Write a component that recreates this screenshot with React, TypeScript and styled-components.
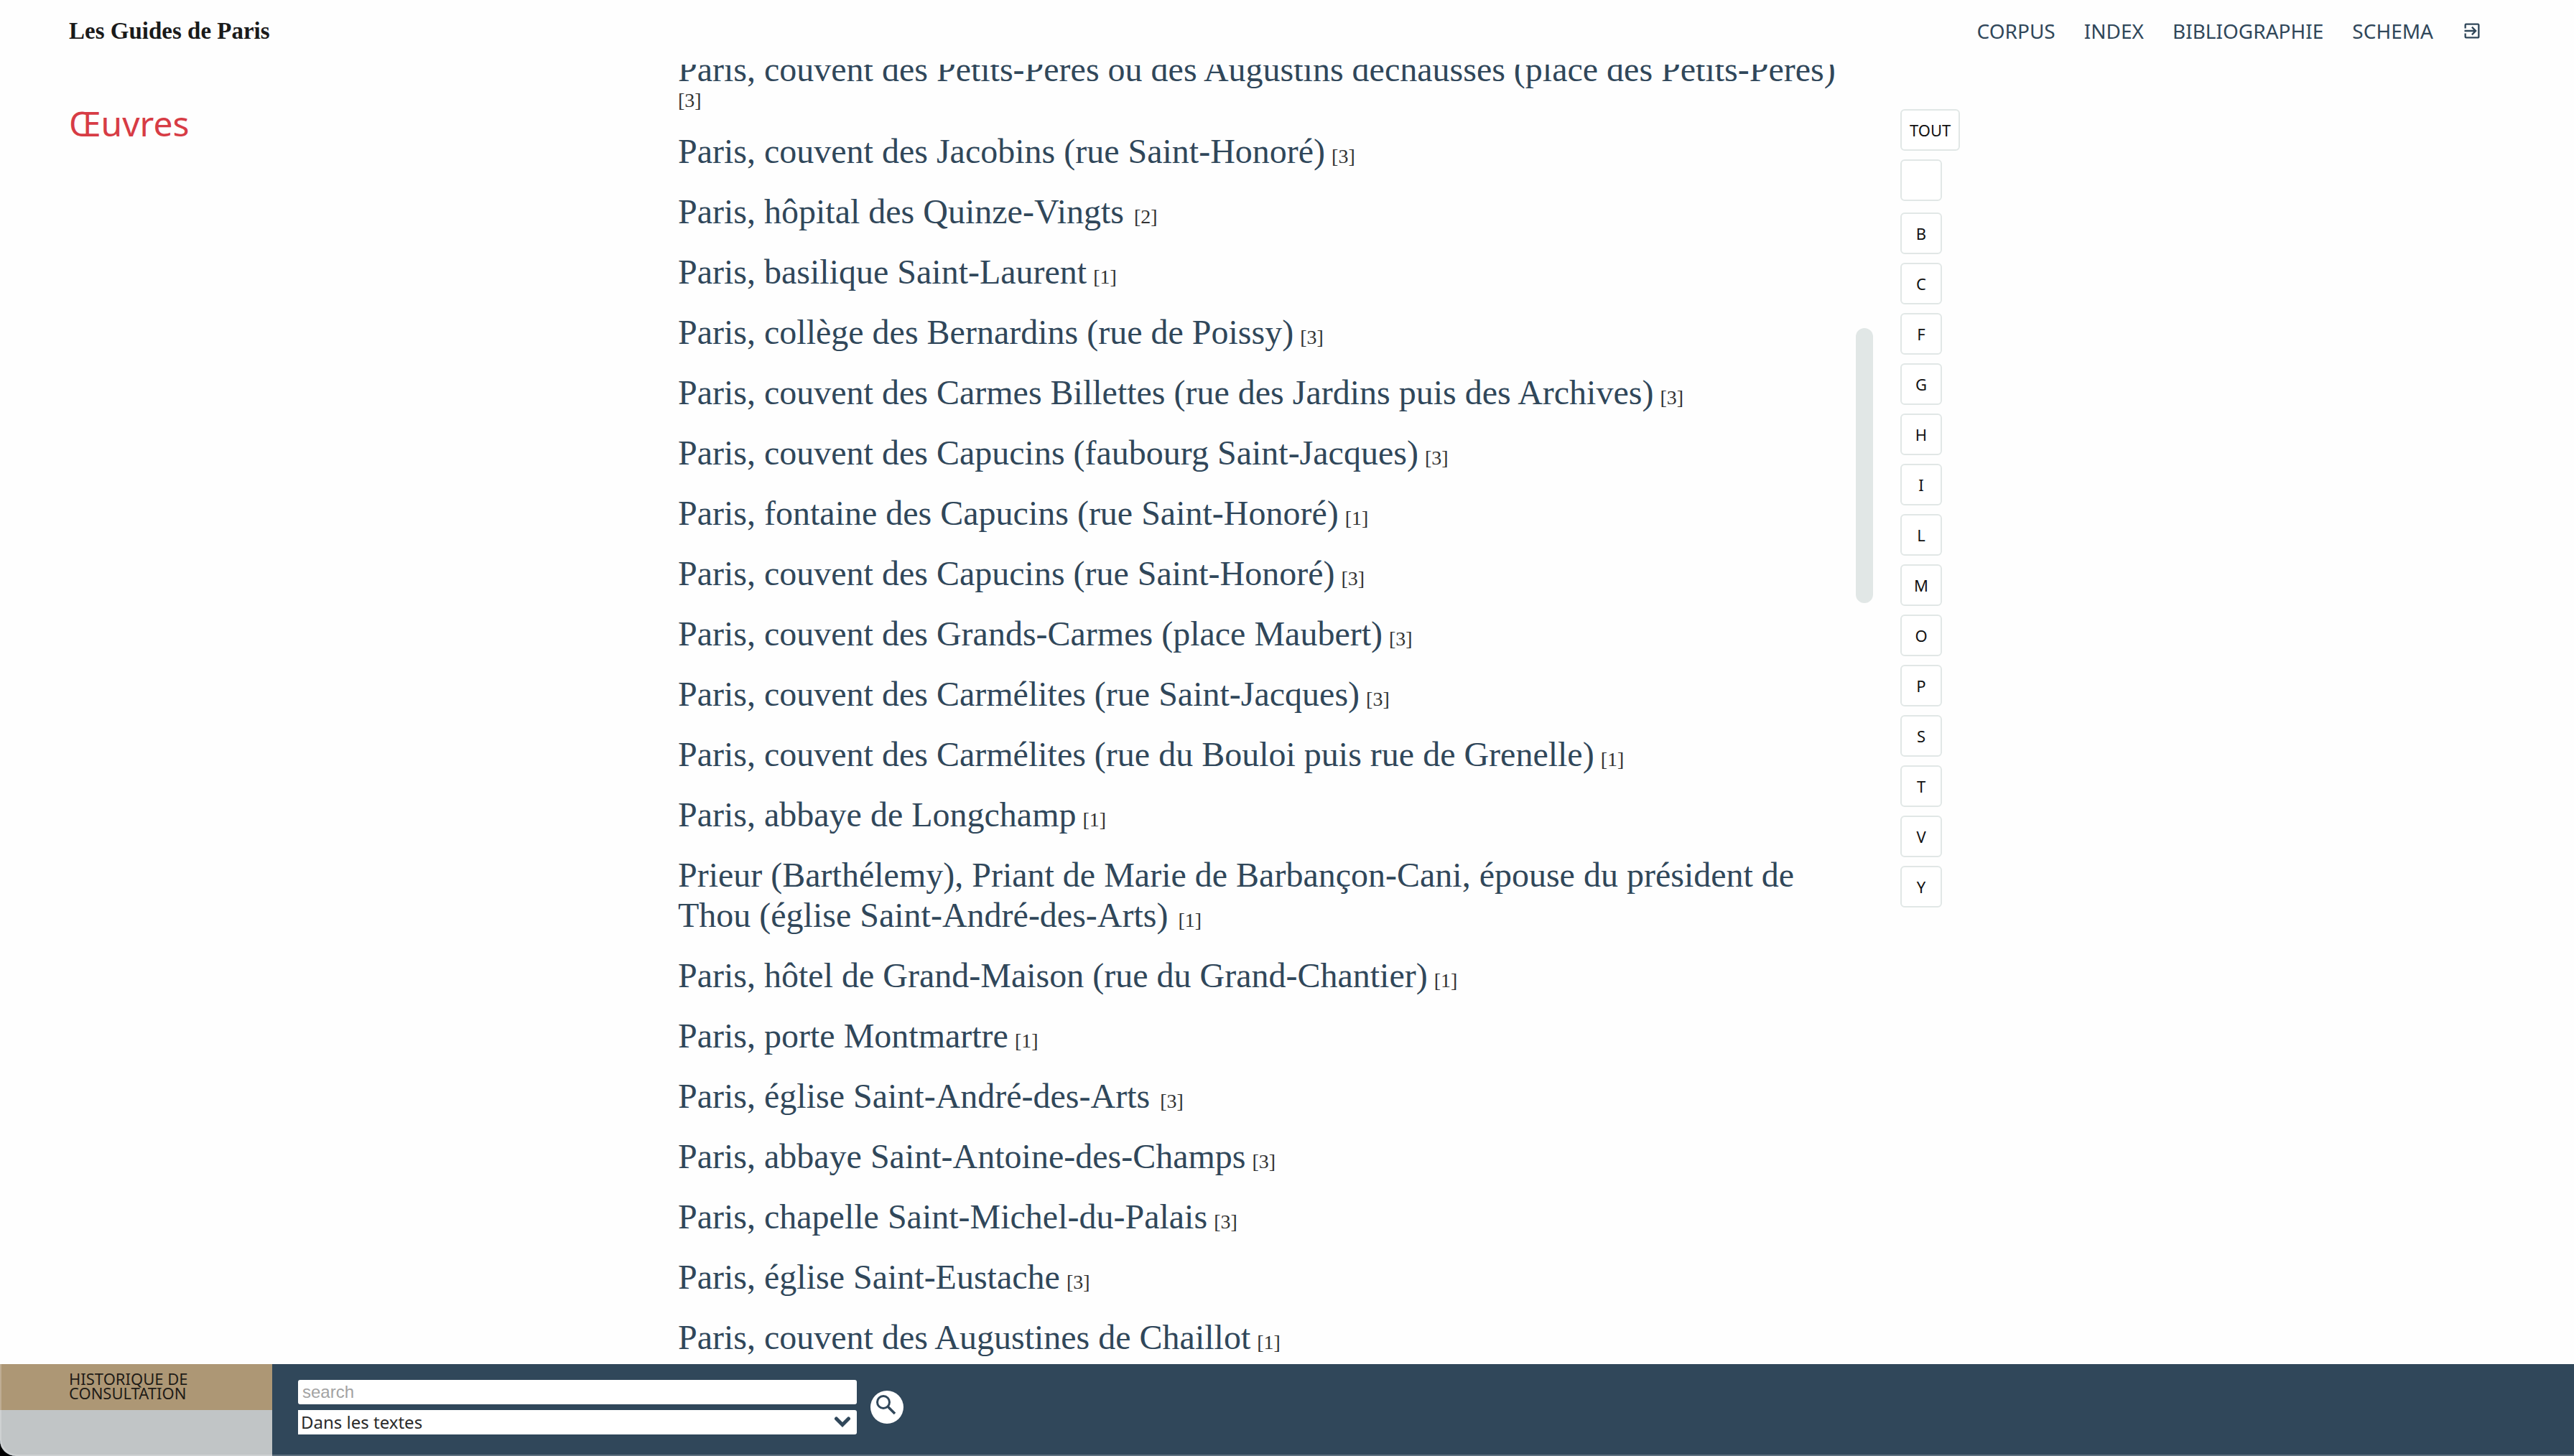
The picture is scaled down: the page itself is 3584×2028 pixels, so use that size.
import React, { useState } from "react";
import styled, { createGlobalStyle } from "styled-components";

const serif = `"Liberation Serif", "Times New Roman", serif`;
const sans = `"Noto Sans", "Open Sans", sans-serif`;
const navy = "#30475a";
const pale = "#e1e7e6";

const GlobalStyle = createGlobalStyle`
  *, *::before, *::after { box-sizing: border-box; }
  body { margin: 0; background: #000; font-family: ${sans}; color: #1a1a1a; }
`;

const Page = styled.div`
  height: 100vh;
  display: grid;
  grid-template-rows: auto minmax(0, 1fr) auto;
  background: #fefefe;
  border-bottom-left-radius: 22px;
  overflow: hidden;
`;

const Header = styled.header`
  height: 90px;
  padding: 0 128px 4px 96px;
  display: flex;
  align-items: center;
  justify-content: space-between;
`;

const SiteTitle = styled.a`
  font-family: ${serif};
  font-size: 33px;
  font-weight: 700;
  color: #1a1a1a;
  text-decoration: none;
`;

const Nav = styled.nav`
  display: flex;
  align-items: center;
  gap: 40px;
`;

const NavLink = styled.a`
  display: flex;
  font-size: 28px;
  line-height: 40px;
  color: ${navy};
  text-decoration: none;
`;

const Main = styled.main`
  display: grid;
  grid-template-columns: 848fr 1664fr 880fr;
  padding: 0 96px;
  min-height: 0;
`;

const Heading = styled.h1`
  margin: 50px 0 0;
  font-size: 48px;
  line-height: 64px;
  font-weight: 400;
  color: #d73c45;
`;

const ListPane = styled.section`
  display: grid;
  grid-template-columns: minmax(0, 1fr) 24px;
  min-height: 0;
`;

const ListWindow = styled.div`
  overflow: hidden;
`;

const WorkList = styled.ul`
  list-style: none;
  margin: -21px 0 0;
  padding: 0;
  display: flex;
  flex-direction: column;
  gap: 28px;
  font-family: ${serif};
`;

const Work = styled.li`
  font-size: 28px;
  line-height: 30px;
  color: #333;
`;

const WorkLink = styled.a`
  margin-right: 2px;
  font-size: 48px;
  line-height: 56px;
  color: ${navy};
  text-decoration: none;
`;

const Track = styled.div`
  display: flex;
  flex-direction: column;
`;

const TrackSpace = styled.div<{ $share: number }>`
  flex: ${(p) => p.$share} 0 0;
`;

const Thumb = styled.div`
  flex: 383 0 0;
  border-radius: 12px;
  background: ${pale};
`;

const Letters = styled.aside`
  display: flex;
  flex-direction: column;
  align-items: flex-start;
  gap: 12px;
  padding: 62px 0 0 38px;
`;

const LetterButton = styled.button<{ $blank?: boolean }>`
  min-width: 58px;
  height: 58px;
  margin: 0 0 ${(p) => (p.$blank ? 4 : 0)}px;
  padding: 0 11px;
  border: 2px solid ${pale};
  border-radius: 6px;
  background: #fff;
  font-family: ${sans};
  font-size: 22px;
  line-height: 30px;
  color: #111;
`;

const Footer = styled.footer`
  position: relative;
  height: 128px;
  display: flex;
  background: ${navy};

  /* pale rim of the window along its left and bottom edges */
  &::after {
    content: "";
    position: absolute;
    inset: 0;
    border-bottom-left-radius: 22px;
    box-shadow: inset 2px -2px 0 rgba(255, 255, 255, 0.22);
    pointer-events: none;
  }
`;

const History = styled.section`
  width: 379px;
  background: #c1c5c6;
`;

const HistoryTitle = styled.h2`
  margin: 0;
  height: 64px;
  padding: 10px 96px 0;
  background: #ad9775;
  font-size: 22px;
  line-height: 20px;
  font-weight: 400;
  color: #1f1c17;
`;

const SearchForm = styled.form`
  display: flex;
  align-items: center;
  gap: 19px;
  padding: 0 36px 14px;
`;

const Fields = styled.div`
  display: flex;
  flex-direction: column;
  gap: 8px;
  width: 778px;
  padding-top: 6px;
`;

const SearchInput = styled.input`
  height: 34px;
  padding: 0 6px;
  border: 0;
  border-radius: 3px;
  background: #fff;
  font-family: "Liberation Sans", Arial, sans-serif;
  font-size: 24px;
  color: #222;
  &::placeholder { color: #a3a3a3; opacity: 1; }
`;

const SelectBox = styled.div`
  position: relative;
  height: 34px;
`;

const ScopeSelect = styled.select`
  appearance: none;
  display: block;
  width: 100%;
  height: 34px;
  padding: 0 40px 0 4px;
  border: 0;
  border-radius: 0 3px 3px 0;
  background: #fff;
  font-family: ${sans};
  font-size: 24px;
  line-height: 34px;
  color: #2a2a2a;
`;

const Chevron = styled.svg`
  position: absolute;
  right: 8px;
  top: 8px;
  pointer-events: none;
`;

const SearchButton = styled.button`
  width: 46px;
  height: 46px;
  margin-top: 6px;
  padding: 0;
  border: 0;
  border-radius: 50%;
  background: #fff;
  display: flex;
`;

const works: [string, number][] = [
  ["Paris, couvent des Petits-Pères ou des Augustins déchaussés (place des Petits-Pères)", 3],
  ["Paris, couvent des Jacobins (rue Saint-Honoré)", 3],
  ["Paris, hôpital des Quinze-Vingts ", 2],
  ["Paris, basilique Saint-Laurent", 1],
  ["Paris, collège des Bernardins (rue de Poissy)", 3],
  ["Paris, couvent des Carmes Billettes (rue des Jardins puis des Archives)", 3],
  ["Paris, couvent des Capucins (faubourg Saint-Jacques)", 3],
  ["Paris, fontaine des Capucins (rue Saint-Honoré)", 1],
  ["Paris, couvent des Capucins (rue Saint-Honoré)", 3],
  ["Paris, couvent des Grands-Carmes (place Maubert)", 3],
  ["Paris, couvent des Carmélites (rue Saint-Jacques)", 3],
  ["Paris, couvent des Carmélites (rue du Bouloi puis rue de Grenelle)", 1],
  ["Paris, abbaye de Longchamp", 1],
  ["Prieur (Barthélemy), Priant de Marie de Barbançon-Cani, épouse du président de Thou (église Saint-André-des-Arts) ", 1],
  ["Paris, hôtel de Grand-Maison (rue du Grand-Chantier)", 1],
  ["Paris, porte Montmartre", 1],
  ["Paris, église Saint-André-des-Arts ", 3],
  ["Paris, abbaye Saint-Antoine-des-Champs", 3],
  ["Paris, chapelle Saint-Michel-du-Palais", 3],
  ["Paris, église Saint-Eustache", 3],
  ["Paris, couvent des Augustines de Chaillot", 1],
];

const letters = ["TOUT", "", "B", "C", "F", "G", "H", "I", "L", "M", "O", "P", "S", "T", "V", "Y"];
const links = ["CORPUS", "INDEX", "BIBLIOGRAPHIE", "SCHEMA"];

export default function App() {
  const [query, setQuery] = useState("");
  return (
    <>
      <GlobalStyle />
      <Page>
        <Header>
          <SiteTitle href="#">Les Guides de Paris</SiteTitle>
          <Nav>
            {links.map((l) => (
              <NavLink key={l} href="#">{l}</NavLink>
            ))}
            <NavLink href="#" aria-label="Connexion">
              <svg width="28" height="28" viewBox="0 0 24 24" fill="currentColor">
                <path d="M11.200 15.900 12.600 17.300l5.200-5.300-5.200-5.300-1.400 1.400L13.900 11H3v2h10.900zM19 3H5a2 2 0 0 0-2 2v4h2V5h14v14H5v-4H3v4a2 2 0 0 0 2 2h14c1.100 0 2-.9 2-2V5c0-1.100-.9-2-2-2z" />
              </svg>
            </NavLink>
          </Nav>
        </Header>
        <Main>
          <Heading>Œuvres</Heading>
          <ListPane>
            <ListWindow>
              <WorkList>
                {works.map(([name, count]) => (
                  <Work key={name}>
                    <WorkLink href="#">{name}</WorkLink> [{count}]
                  </Work>
                ))}
              </WorkList>
            </ListWindow>
            <Track>
              <TrackSpace $share={367} />
              <Thumb />
              <TrackSpace $share={1060} />
            </Track>
          </ListPane>
          <Letters>
            {letters.map((l) => (
              <LetterButton key={l} type="button" $blank={l === ""} aria-label={l || "Sans initiale"}>
                {l}
              </LetterButton>
            ))}
          </Letters>
        </Main>
        <Footer>
          <History>
            <HistoryTitle>HISTORIQUE DE CONSULTATION</HistoryTitle>
          </History>
          <SearchForm onSubmit={(e) => e.preventDefault()}>
            <Fields>
              <SearchInput
                type="text"
                aria-label="Recherche"
                placeholder="search"
                value={query}
                onChange={(e) => setQuery(e.target.value)}
              />
              <SelectBox>
                <ScopeSelect aria-label="Portée de la recherche">
                  <option>Dans les textes</option>
                </ScopeSelect>
                <Chevron width="24" height="18" viewBox="0 0 24 18" fill="none" stroke={navy} strokeWidth="5" strokeLinecap="round">
                  <path d="M3.500 4 12 12.500 20.500 4" />
                </Chevron>
              </SelectBox>
            </Fields>
            <SearchButton type="submit" aria-label="Chercher">
              <svg width="46" height="46" viewBox="0 0 46 46" fill="none" stroke={navy} strokeWidth="3">
                <circle cx="18" cy="16" r="8.500" />
                <path d="M24.500 22.500 34 32" strokeWidth="3.500" />
              </svg>
            </SearchButton>
          </SearchForm>
        </Footer>
      </Page>
    </>
  );
}
